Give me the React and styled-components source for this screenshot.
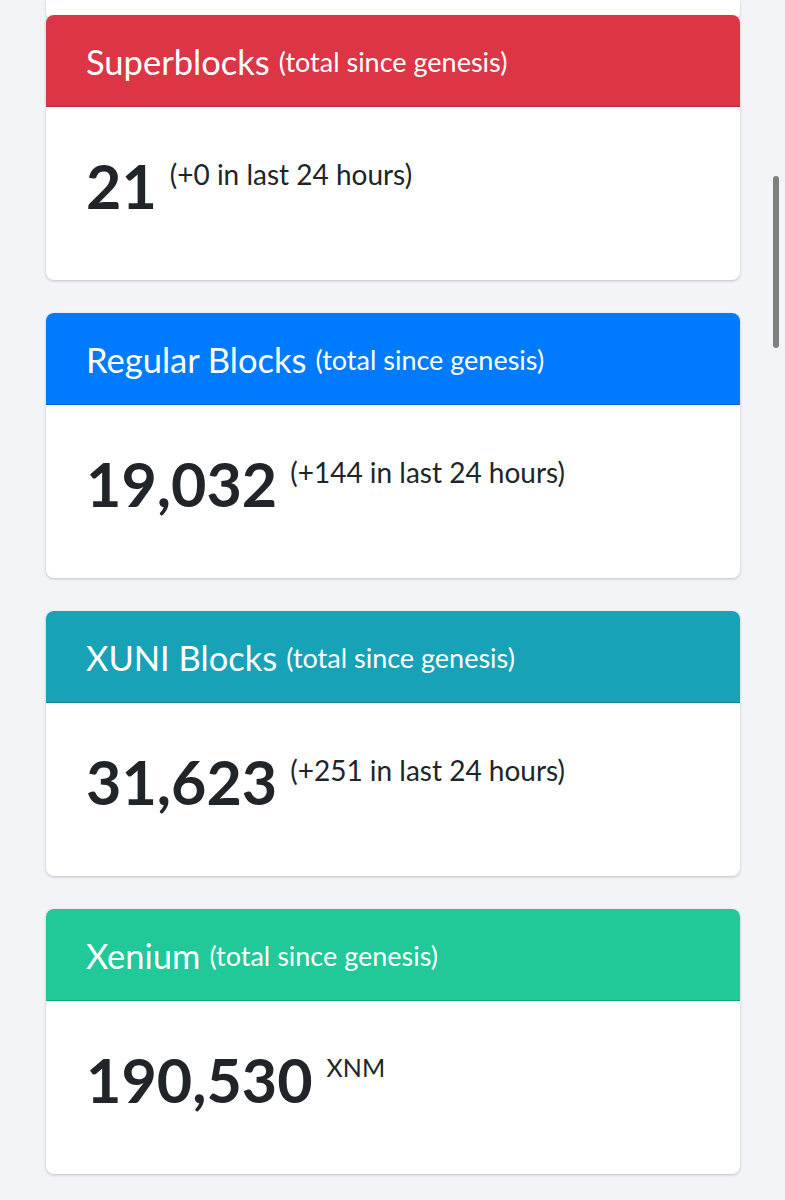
import styled, { createGlobalStyle } from 'styled-components';

const GlobalStyle = createGlobalStyle`
  html, body {
    margin: 0;
    padding: 0;
    background: #f3f4f8;
    font-family: 'Lato', 'Liberation Sans', sans-serif;
    color: #212529;
  }
`;

const Page = styled.div`
  padding: 0 45px 40px 46px;
  min-height: 1200px;
  box-sizing: border-box;
`;

const PrevTail = styled.div`
  height: 20px;
  margin-bottom: -5px;
  background: #fff;
  border-radius: 0 0 8px 8px;
  box-shadow: 0 1px 3px rgba(0, 0, 0, 0.18);
`;

const Card = styled.div`
  position: relative;
  background: #fff;
  border-radius: 8px;
  overflow: hidden;
  box-shadow: 0 1px 3px rgba(0, 0, 0, 0.22);
  margin-bottom: 33px;
`;

const Header = styled.div`
  height: 92px;
  box-sizing: border-box;
  display: flex;
  align-items: center;
  padding: 2px 40px 0;
  background: ${({ $color }) => $color};
  border-bottom: 1px solid rgba(0, 0, 0, 0.18);
  color: #fff;
  white-space: nowrap;
`;

const Title = styled.span`
  font-size: 34.5px;
  margin-right: 9px;
`;

const Since = styled.span`
  font-size: 27px;
`;

const Body = styled.div`
  height: 173px;
  box-sizing: border-box;
  padding: 48px 40px 0;
  display: flex;
  align-items: flex-start;
`;

const Value = styled.span`
  font-size: 61px;
  font-weight: 700;
  line-height: 1;
  margin-right: 13px;
`;

const Note = styled.span`
  font-size: 28px;
  line-height: 1;
  margin-top: 5px;
`;

const Unit = styled.span`
  font-size: 25px;
  line-height: 1;
  margin-top: 6px;
  margin-left: 1px;
`;

const Scrollbar = styled.div`
  position: fixed;
  left: 773px;
  top: 176px;
  width: 6px;
  height: 172px;
  border-radius: 3px;
  background: #808080;
`;

const STATS = [
  { title: 'Superblocks', color: '#dc3545', value: '21', note: '(+0 in last 24 hours)' },
  { title: 'Regular Blocks', color: '#007bff', value: '19,032', note: '(+144 in last 24 hours)' },
  { title: 'XUNI Blocks', color: '#17a2b8', value: '31,623', note: '(+251 in last 24 hours)' },
  { title: 'Xenium', color: '#20c997', value: '190,530', unit: 'XNM' },
];

export default function App() {
  return (
    <>
      <GlobalStyle />
      <Page>
        <PrevTail />
        {STATS.map((s) => (
          <Card key={s.title}>
            <Header $color={s.color}>
              <Title>{s.title}</Title>
              <Since>(total since genesis)</Since>
            </Header>
            <Body>
              <Value>{s.value}</Value>
              {s.note && <Note>{s.note}</Note>}
              {s.unit && <Unit>{s.unit}</Unit>}
            </Body>
          </Card>
        ))}
      </Page>
      <Scrollbar />
    </>
  );
}
